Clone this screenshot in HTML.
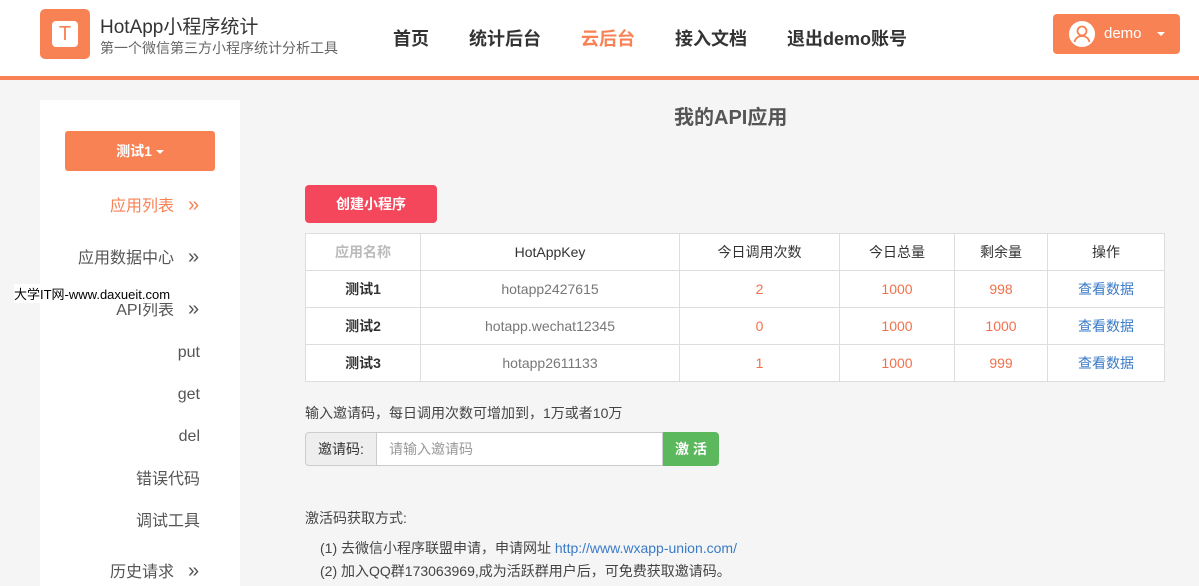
<!DOCTYPE html>
<html><head><meta charset="utf-8"><style>
*{margin:0;padding:0;box-sizing:border-box}
body{width:1199px;height:586px;overflow:hidden;background:#f5f5f5;font-family:"Liberation Sans","Noto Sans CJK SC",sans-serif;position:relative;color:#333}
.hdr{position:absolute;left:0;top:0;width:1199px;height:80px;background:#fff;border-bottom:4px solid #f98255}
.logo{position:absolute;left:40px;top:9px;width:50px;height:50px;background:#f98255;border-radius:5px}
.logo div{position:absolute;left:12px;top:12px;width:26px;height:26px;background:#fff;border-radius:4px;color:#f98255;font-size:20px;text-align:center;line-height:26px}
.t1{position:absolute;left:100px;top:12px;font-size:19px;color:#333}
.t2{position:absolute;left:100px;top:38px;font-size:14px;color:#666}
.nav{position:absolute;top:25px;font-size:18px;color:#333;font-weight:bold}
.user{position:absolute;left:1053px;top:14px;width:127px;height:40px;background:#f98255;border-radius:4px;color:#fff}
.side{position:absolute;left:40px;top:100px;width:200px;height:486px;background:#fff}
.sel{position:absolute;left:25px;top:31px;width:150px;height:40px;background:#f98255;border-radius:3px;color:#fff;font-size:14px;font-weight:bold;text-align:center;line-height:40px}
.mi{position:absolute;right:40px;font-size:16px;line-height:20px;color:#555;text-align:right;white-space:nowrap}
.ar{position:absolute;left:148px;font-size:20px;line-height:20px;color:#555}
table{position:absolute;left:305px;top:233px;border-collapse:collapse;background:#fff;font-size:14px}
td{border:1px solid #ddd;height:37px;text-align:center;color:#333}
.o{color:#f0714c}.g{color:#777}.b{color:#3a7bc8}
</style></head><body>
<div class="hdr">
<div class="logo"><div>T</div></div>
<div class="t1">HotApp小程序统计</div>
<div class="t2">第一个微信第三方小程序统计分析工具</div>
<div class="nav" style="left:393px">首页</div>
<div class="nav" style="left:469px">统计后台</div>
<div class="nav" style="left:581px;color:#f98255">云后台</div>
<div class="nav" style="left:675px">接入文档</div>
<div class="nav" style="left:787px">退出demo账号</div>
<div class="user">
<svg style="position:absolute;left:15px;top:6px" width="28" height="28" viewBox="0 0 28 28"><circle cx="14" cy="14" r="13" fill="#fff"/><circle cx="14" cy="11" r="4.5" fill="none" stroke="#f98255" stroke-width="1.8"/><path d="M6.5 22c1-4 4-6 7.5-6s6.5 2 7.5 6" fill="none" stroke="#f98255" stroke-width="1.8"/></svg>
<span style="position:absolute;left:51px;top:11px;font-size:15px">demo</span>
<span style="position:absolute;left:104px;top:18px;border-left:4px solid transparent;border-right:4px solid transparent;border-top:4px solid #fff"></span>
</div>
</div>
<div class="side">
<div class="sel">测试1 <span style="display:inline-block;vertical-align:middle;border-left:4px solid transparent;border-right:4px solid transparent;border-top:4px solid #fff"></span></div>
<div class="mi" style="top:97px;right:66px;color:#f98255">应用列表</div><div class="ar" style="top:95px;color:#f98255">»</div>
<div class="mi" style="top:149px;right:66px">应用数据中心</div><div class="ar" style="top:147px">»</div>
<div class="mi" style="top:201px;right:66px">API列表</div><div class="ar" style="top:199px">»</div>
<div class="mi" style="top:243px">put</div>
<div class="mi" style="top:285px">get</div>
<div class="mi" style="top:327px">del</div>
<div class="mi" style="top:370px">错误代码</div>
<div class="mi" style="top:412px">调试工具</div>
<div class="mi" style="top:463px;right:66px">历史请求</div><div class="ar" style="top:461px">»</div>
</div>
<div style="position:absolute;left:14px;top:284px;font-size:13px;color:#000;background:#fff">大学IT网-www.daxueit.com</div>
<div style="position:absolute;left:674px;top:101px;font-size:20px;font-weight:bold;color:#555">我的API应用</div>
<div style="position:absolute;left:305px;top:185px;width:132px;height:38px;background:#f5475c;border-radius:4px;color:#fff;font-size:14px;font-weight:bold;text-align:center;line-height:38px">创建小程序</div>
<table>
<tr><td style="width:115px;color:#bbb;font-weight:bold">应用名称</td><td style="width:259px">HotAppKey</td><td style="width:160px">今日调用次数</td><td style="width:115px">今日总量</td><td style="width:93px">剩余量</td><td style="width:117px">操作</td></tr>
<tr><td style="font-weight:bold">测试1</td><td class="g">hotapp2427615</td><td class="o">2</td><td class="o">1000</td><td class="o">998</td><td class="b">查看数据</td></tr>
<tr><td style="font-weight:bold">测试2</td><td class="g">hotapp.wechat12345</td><td class="o">0</td><td class="o">1000</td><td class="o">1000</td><td class="b">查看数据</td></tr>
<tr><td style="font-weight:bold">测试3</td><td class="g">hotapp2611133</td><td class="o">1</td><td class="o">1000</td><td class="o">999</td><td class="b">查看数据</td></tr>
</table>
<div style="position:absolute;left:305px;top:403px;font-size:14px;color:#444">输入邀请码，每日调用次数可增加到，1万或者10万</div>
<div style="position:absolute;left:305px;top:432px;width:72px;height:34px;background:#eee;border:1px solid #ccc;border-radius:4px 0 0 4px;font-size:14px;line-height:32px;text-align:center">邀请码:</div>
<div style="position:absolute;left:376px;top:432px;width:287px;height:34px;background:#fff;border:1px solid #ccc;font-size:14px;line-height:32px;padding-left:12px;color:#999">请输入邀请码</div>
<div style="position:absolute;left:663px;top:432px;width:56px;height:34px;background:#5cb85c;border-radius:0 4px 4px 0;color:#fff;font-size:14px;font-weight:bold;line-height:34px;text-align:center">激 活</div>
<div style="position:absolute;left:305px;top:508px;font-size:14px;color:#444">激活码获取方式:</div>
<div style="position:absolute;left:320px;top:538px;font-size:14px;color:#444">(1) 去微信小程序联盟申请，申请网址 <span class="b">http://www.wxapp-union.com/</span></div>
<div style="position:absolute;left:320px;top:561px;font-size:14px;color:#444">(2) 加入QQ群173063969,成为活跃群用户后，可免费获取邀请码。</div>
</body></html>
